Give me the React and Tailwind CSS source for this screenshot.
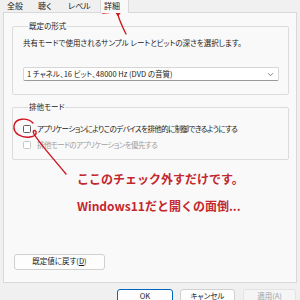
import React from 'react';

const jp = "font-['Noto_Sans_CJK_JP',sans-serif] [font-feature-settings:'palt']";

const Tab = ({ label, w, pl, active }) => (
  <div
    className={`h-[13px] text-[8px] leading-[12px] ${pl} ${w} ${
      active ? 'bg-[#f9f9f9] border-l border-r border-[#d9d9d9] relative z-10' : 'text-[#1a1a1a]'
    }`}
  >
    {label}
  </div>
);

const Check = ({ label, disabled }) => (
  <div className="flex items-center h-[10px]">
    <span
      className={`w-[8px] h-[8px] rounded-[1.5px] border bg-white ${
        disabled ? 'border-[#c8c8c8]' : 'border-[#5c5c5c]'
      }`}
    />
    <span
      className={`ml-[6px] text-[7.5px] leading-[10px] tracking-[-0.6px] ${
        disabled ? 'text-[#a0a0a0]' : 'text-[#1a1a1a]'
      }`}
    >
      {label}
    </span>
  </div>
);

const Btn = ({ children, className }) => (
  <div className={`h-[16px] rounded-[3px] border flex justify-center pt-[1px] text-[7.5px] leading-[10px] ${className}`}>
    {children}
  </div>
);

export default function App() {
  return (
    <div className={`relative w-[300px] h-[300px] overflow-hidden bg-[#f0f0f0] text-[#1a1a1a] ${jp}`}>
      {/* tabs */}
      <div className="flex pl-[3px] h-[12px]">
        <Tab label="全般" w="w-[31px]" pl="pl-[4px]" />
        <Tab label="聴く" w="w-[31px]" pl="pl-[4px]" />
        <Tab label="レベル" w="w-[35px]" pl="pl-[3px]" />
        <Tab label="詳細" w="w-[29px]" pl="pl-[3px]" active />
      </div>

      {/* panel */}
      <div className="mx-[3px] h-[271px] border border-[#d9d9d9] bg-[#f9f9f9] flex flex-col pt-[8px] pl-[8px] pr-[7px] pb-[12px]">
        <fieldset className="border border-[#dcdcdc] rounded-[2px] pl-[10px] pr-[9px] pb-[13px]">
          <legend className="ml-[5px] px-[1px] text-[7.5px] leading-[10px]">既定の形式</legend>
          <div className="mt-[7px] text-[7.5px] leading-[10px]">
            共有モードで使用されるサンプル レートとビットの深さを選択します。
          </div>
          <div className="mt-[19px] h-[14px] bg-white border border-[#d6d6d6] border-b-[#9a9a9a] rounded-[2px] flex items-center justify-between pl-[3px] pr-[4px]">
            <span className="text-[7.5px] leading-[10px]">1 チャネル、16 ビット、48000 Hz (DVD の音質)</span>
            <svg width="7" height="5" viewBox="0 0 7 5" fill="none" stroke="#606060" strokeWidth="0.8">
              <path d="M1 1.2 L3.5 3.7 L6 1.2" />
            </svg>
          </div>
        </fieldset>

        <fieldset className="mt-[7px] border border-[#dcdcdc] rounded-[2px] pl-[10px] pr-[9px] pb-[9px]">
          <legend className="ml-[5px] px-[1px] text-[7.5px] leading-[10px]">排他モード</legend>
          <div className="mt-[12px] flex flex-col gap-[6px]">
            <Check label="アプリケーションによりこのデバイスを排他的に制御できるようにする" />
            <Check label="排他モードのアプリケーションを優先する" disabled />
          </div>
        </fieldset>

        <div className="ml-[65px] mt-[12px] flex flex-col gap-[13px] font-['Noto_Sans_CJK_JP',sans-serif] [font-feature-settings:normal] font-bold text-[12px] leading-[14px] text-[#c4262e]">
          <div>ここのチェック外すだけです。</div>
          <div>Windows11だと開くの面倒...</div>
        </div>

        <div className="flex-1" />
        <Btn className="w-[91px] h-[15px] bg-[#fdfdfd] border-[#d0d0d0] ml-[2px]">既定値に戻す(<span className="underline">D</span>)</Btn>
      </div>

      {/* bottom buttons */}
      <div className="flex justify-end pr-[4px] mt-[6px] gap-[7px]">
        <Btn className="w-[56px] bg-[#fdfdfd] border-[#0067c0]">OK</Btn>
        <Btn className="w-[55px] bg-[#fdfdfd] border-[#d0d0d0]">キャンセル</Btn>
        <Btn className="w-[53px] ml-[1px] bg-[#f5f5f5] border-[#e3e3e3] text-[#a0a0a0]">適用(A)</Btn>
      </div>

      {/* red annotation strokes */}
      <svg className="absolute inset-0 pointer-events-none" width="300" height="300" viewBox="0 0 300 300" fill="none" stroke="#cf1420" strokeLinecap="round" strokeLinejoin="round">
        <path strokeWidth="1.4" d="M33 123 C27 117 15 118 14 126 C13 134 22 138 30 137 C34 136.5 37 134.5 36 131.5 C35 129.5 32 130.5 34 134 C40 144 52 157 66 174" />
        <path strokeWidth="2.6" d="M103 12.5 C110 12 117 11 124 9.5" />
        <path strokeWidth="1.8" d="M114 9 L118 15 L121 11" />
        <path strokeWidth="1.3" d="M118 15 C120 22 123 28 126 34" />
        <path strokeWidth="1.3" d="M122 7 C124 5 126 4 127 5" />
      </svg>
    </div>
  );
}
